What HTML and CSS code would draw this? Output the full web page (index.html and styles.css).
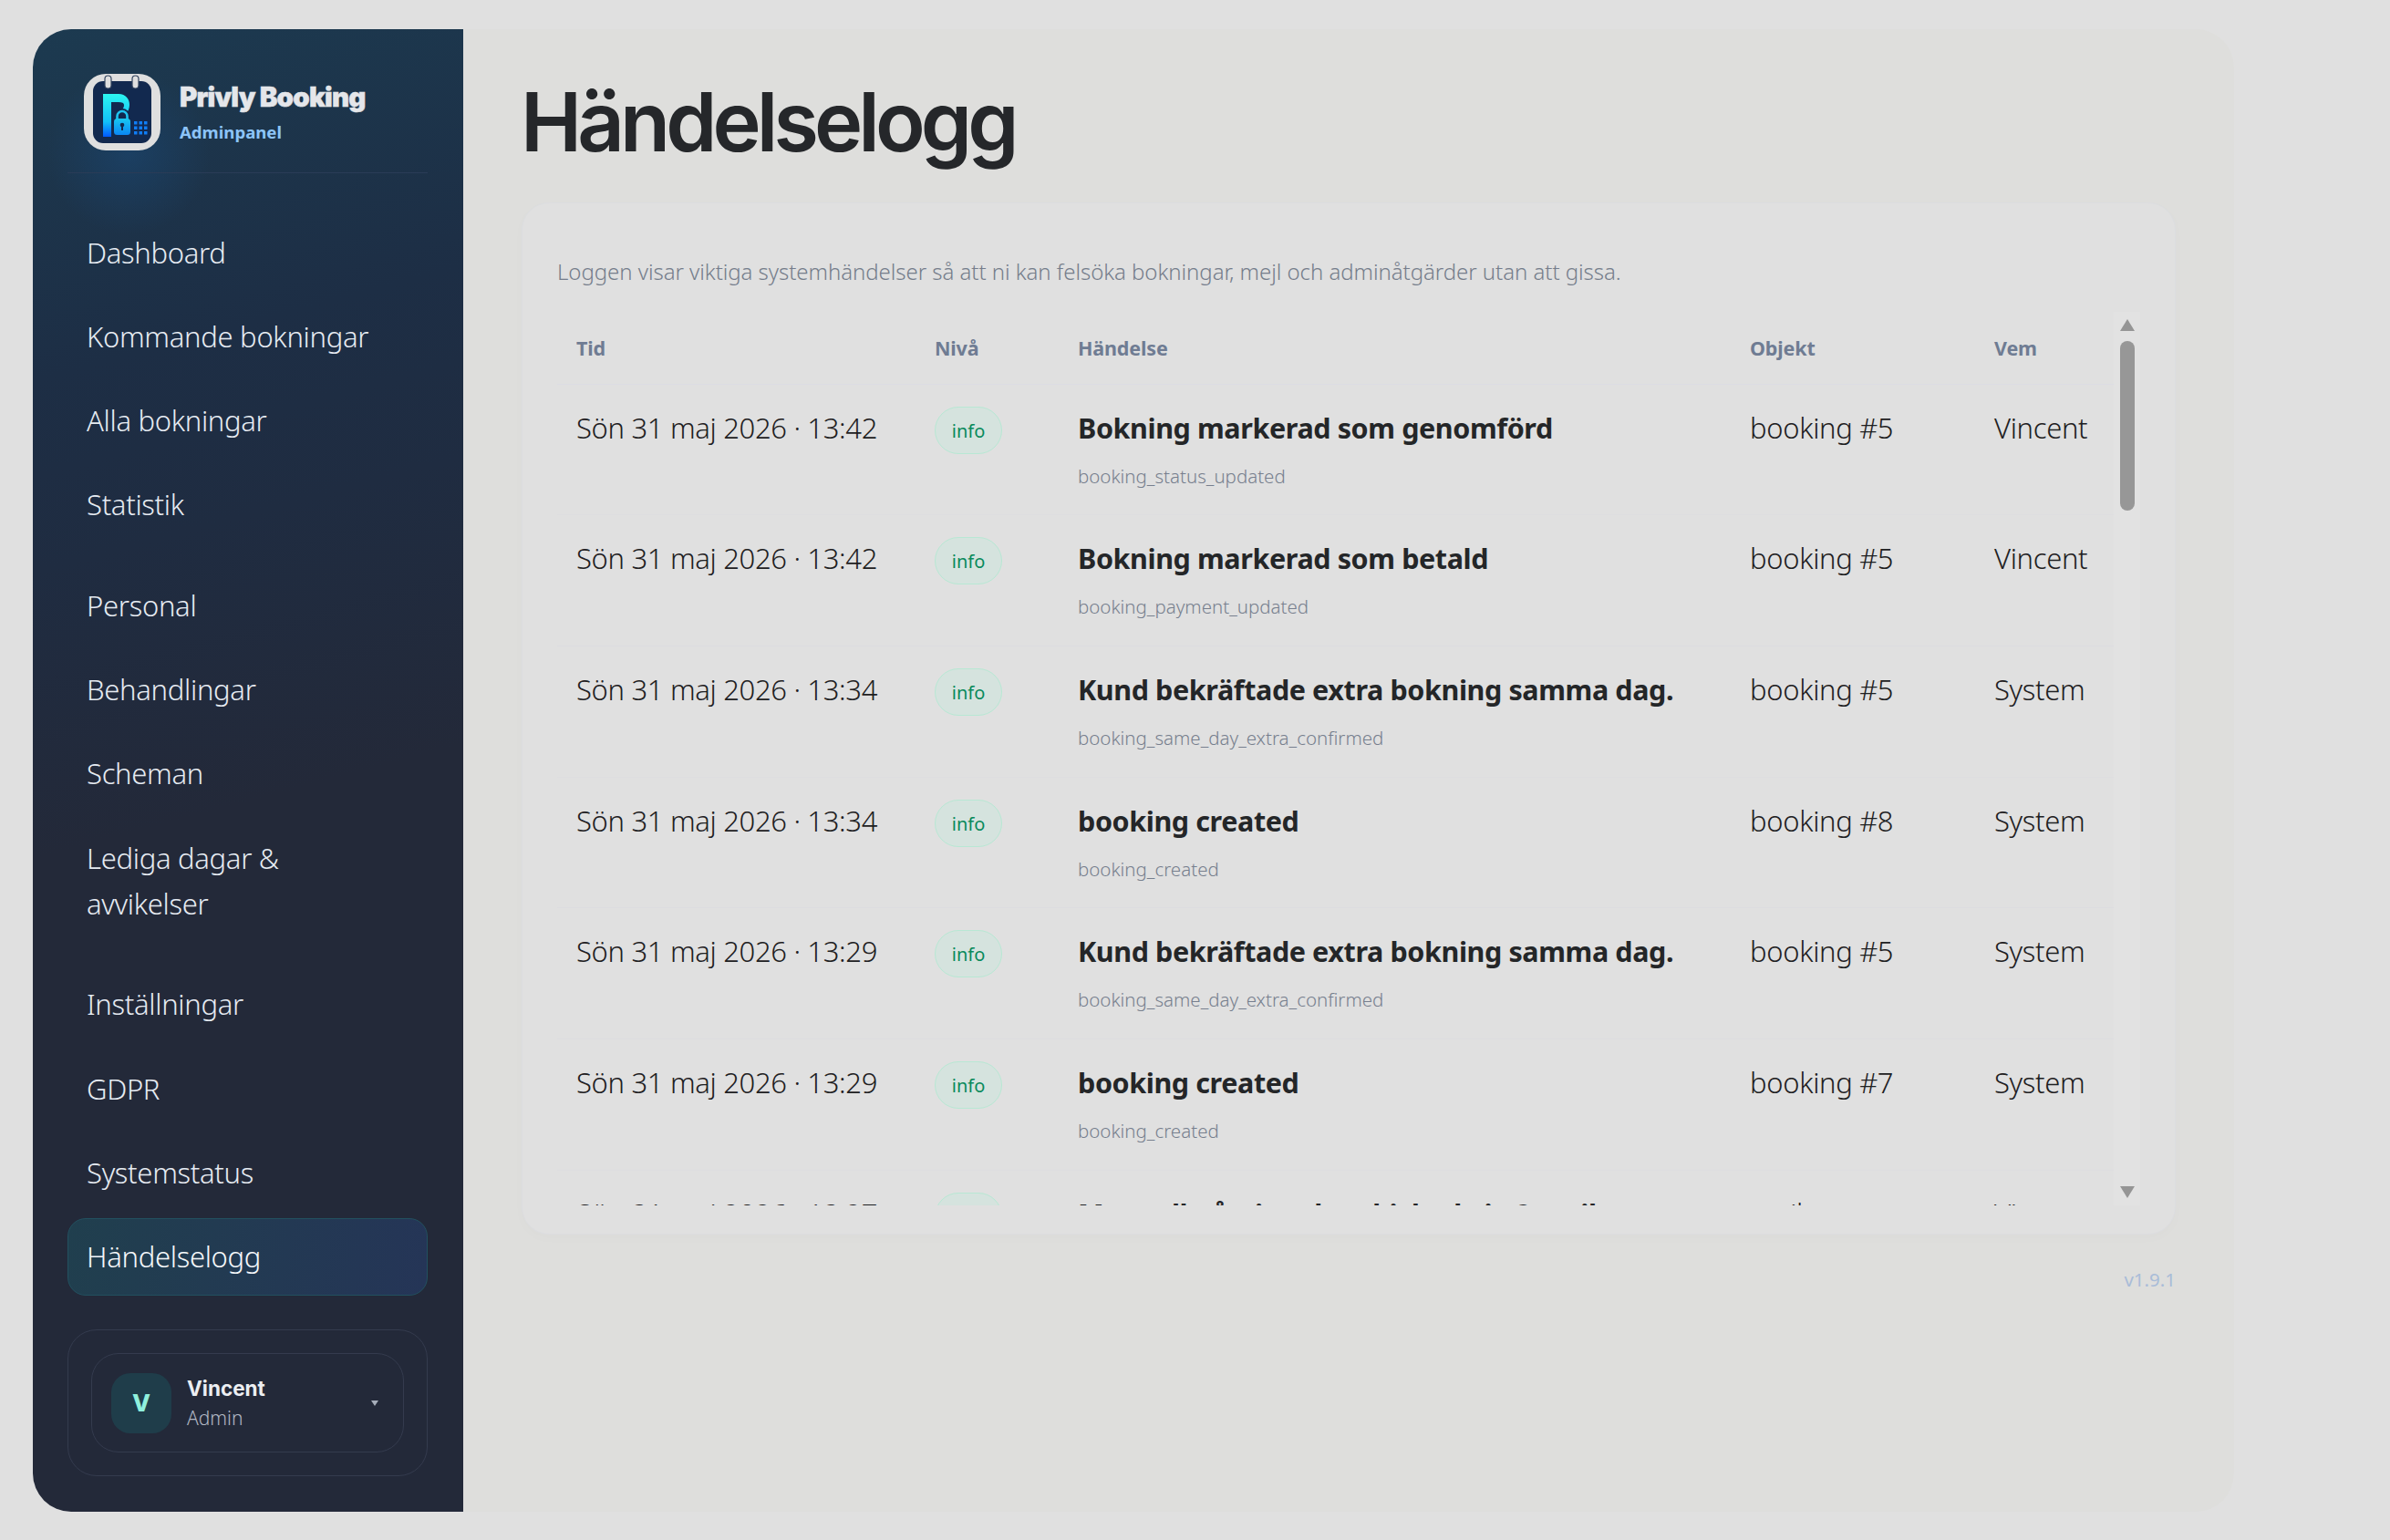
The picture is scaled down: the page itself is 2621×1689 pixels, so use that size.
FILE: index.html
```html
<!DOCTYPE html>
<html lang="sv">

<head>
    <meta charset="UTF-8" />
    <title>Händelselogg</title>
    <link rel="stylesheet" href="styles.css">
</head>

<body>
    <div class="app">
        <aside class="sidebar">
            <div class="brand">
                <svg class="brand-logo" viewBox="0 0 84 84">
                    <defs>
                        <linearGradient id="pGrad" x1="0" y1="0" x2="0" y2="1">
                            <stop offset="0" stop-color="#2cf5f0" />
                            <stop offset="0.65" stop-color="#12c0f8" />
                            <stop offset="1" stop-color="#0058ff" />
                        </linearGradient>
                        <linearGradient id="lockGrad" x1="0" y1="0" x2="0" y2="1">
                            <stop offset="0" stop-color="#18c8f0" />
                            <stop offset="1" stop-color="#0a86f5" />
                        </linearGradient>
                    </defs>
                    <rect width="84" height="84" rx="24" fill="#dfdfdf" />
                    <rect x="10" y="8" width="64" height="68" rx="11" fill="#12294f" />
                    <rect x="23" y="2" width="7" height="14" rx="3.500" fill="#dfdfdf" stroke="#33445e" stroke-width="1.200" />
                    <rect x="53" y="2" width="7" height="14" rx="3.500" fill="#dfdfdf" stroke="#33445e" stroke-width="1.200" />
                    <path d="M21 22H38C46 22 50 28 50 34C50 38 48.500 41 46 44L41 40C43.500 38 44 36 44 34C44 32 42 31 38 31H30V69H21Z" fill="url(#pGrad)" />
                    <path d="M36.500 50v-3.500a5.500 5.500 0 0 1 11 0V50" fill="none" stroke="#12294f" stroke-width="6" />
                    <path d="M36.500 50v-3.500a5.500 5.500 0 0 1 11 0V50" fill="none" stroke="#1fc4f0" stroke-width="2.600" />
                    <rect x="33" y="49" width="18" height="18" rx="3.500" fill="url(#lockGrad)" />
                    <circle cx="42" cy="56" r="2.300" fill="#12294f" />
                    <rect x="41" y="56" width="2" height="6" fill="#12294f" />
                    <g fill="#0f7df5">
                        <rect x="55" y="52" width="3.500" height="3.500" />
                        <rect x="60.500" y="52" width="3.500" height="3.500" />
                        <rect x="66" y="52" width="3.500" height="3.500" />
                        <rect x="55" y="57.500" width="3.500" height="3.500" />
                        <rect x="60.500" y="57.500" width="3.500" height="3.500" />
                        <rect x="66" y="57.500" width="3.500" height="3.500" />
                        <rect x="55" y="63" width="3.500" height="3.500" />
                        <rect x="60.500" y="63" width="3.500" height="3.500" />
                        <rect x="66" y="63" width="3.500" height="3.500" />
                    </g>
                </svg>
                <div class="brand-text">
                    <div class="brand-name">Privly Booking</div>
                    <div class="brand-sub">Adminpanel</div>
                </div>
            </div>

            <nav class="nav">
                <div class="nav-group">
                    <a class="nav-item">Dashboard</a>
                    <a class="nav-item">Kommande bokningar</a>
                    <a class="nav-item">Alla bokningar</a>
                    <a class="nav-item">Statistik</a>
                </div>
                <div class="nav-group">
                    <a class="nav-item">Personal</a>
                    <a class="nav-item">Behandlingar</a>
                    <a class="nav-item">Scheman</a>
                    <a class="nav-item">Lediga dagar &amp;<br>avvikelser</a>
                </div>
                <div class="nav-group">
                    <a class="nav-item">Inställningar</a>
                    <a class="nav-item">GDPR</a>
                    <a class="nav-item">Systemstatus</a>
                    <a class="nav-item active">Händelselogg</a>
                </div>
            </nav>

            <div class="user-box">
                <div class="user-inner">
                    <div class="avatar">V</div>
                    <div class="user-text">
                        <div class="user-name">Vincent</div>
                        <div class="user-role">Admin</div>
                    </div>
                    <span class="user-caret"></span>
                </div>
            </div>
        </aside>

        <main class="main">
            <h1 class="page-title">Händelselogg</h1>

            <section class="card">
                <p class="card-intro">Loggen visar viktiga systemhändelser så att ni kan felsöka bokningar, mejl och adminåtgärder utan att gissa.</p>

                <div class="log-wrap">
                    <div class="log-viewport">
                        <table class="log-table">
                            <colgroup>
                                <col class="col-time">
                                <col class="col-level">
                                <col class="col-event">
                                <col class="col-object">
                                <col class="col-who">
                            </colgroup>
                            <thead>
                                <tr>
                                    <th>Tid</th>
                                    <th>Nivå</th>
                                    <th>Händelse</th>
                                    <th>Objekt</th>
                                    <th>Vem</th>
                                </tr>
                            </thead>
                            <tbody>
                                <tr>
                                    <td>Sön 31 maj 2026 · 13:42</td>
                                    <td><span class="badge">info</span></td>
                                    <td><div class="event-title">Bokning markerad som genomförd</div><div class="event-code">booking_status_updated</div></td>
                                    <td>booking #5</td>
                                    <td>Vincent</td>
                                </tr>
                                <tr>
                                    <td>Sön 31 maj 2026 · 13:42</td>
                                    <td><span class="badge">info</span></td>
                                    <td><div class="event-title">Bokning markerad som betald</div><div class="event-code">booking_payment_updated</div></td>
                                    <td>booking #5</td>
                                    <td>Vincent</td>
                                </tr>
                                <tr>
                                    <td>Sön 31 maj 2026 · 13:34</td>
                                    <td><span class="badge">info</span></td>
                                    <td><div class="event-title">Kund bekräftade extra bokning samma dag.</div><div class="event-code">booking_same_day_extra_confirmed</div></td>
                                    <td>booking #5</td>
                                    <td>System</td>
                                </tr>
                                <tr>
                                    <td>Sön 31 maj 2026 · 13:34</td>
                                    <td><span class="badge">info</span></td>
                                    <td><div class="event-title">booking created</div><div class="event-code">booking_created</div></td>
                                    <td>booking #8</td>
                                    <td>System</td>
                                </tr>
                                <tr>
                                    <td>Sön 31 maj 2026 · 13:29</td>
                                    <td><span class="badge">info</span></td>
                                    <td><div class="event-title">Kund bekräftade extra bokning samma dag.</div><div class="event-code">booking_same_day_extra_confirmed</div></td>
                                    <td>booking #5</td>
                                    <td>System</td>
                                </tr>
                                <tr>
                                    <td>Sön 31 maj 2026 · 13:29</td>
                                    <td><span class="badge">info</span></td>
                                    <td><div class="event-title">booking created</div><div class="event-code">booking_created</div></td>
                                    <td>booking #7</td>
                                    <td>System</td>
                                </tr>
                                <tr>
                                    <td>Sön 31 maj 2026 · 13:27</td>
                                    <td><span class="badge">info</span></td>
                                    <td><div class="event-title">Manuell påminnelse skickad via 2 mejl</div><div class="event-code">booking_reminder_sent</div></td>
                                    <td>mejl</td>
                                    <td>Vincent</td>
                                </tr>
                            </tbody>
                        </table>
                    </div>
                    <div class="scrollbar">
                        <span class="scroll-arrow up"></span>
                        <span class="scroll-thumb"></span>
                        <span class="scroll-arrow down"></span>
                    </div>
                </div>
            </section>

            <div class="version">v1.9.1</div>
        </main>
    </div>
</body>

</html>
```

FILE: styles.css
```css
body {
    margin: 0;
    font-family: 'Noto Sans', 'Open Sans', sans-serif;
    background-color: #e0e0e0;
    color: #242628;
}

/* Whole app frame */
.app {
    display: flex;
    width: 2414px;
    height: 1626px;
    margin: 32px 0 0 36px;
}

/* Sidebar */
.sidebar {
    width: 472px;
    box-sizing: border-box;
    padding: 0 39px 0 38px;
    border-radius: 42px 0 0 42px;
    display: flex;
    flex-direction: column;
    background-image: radial-gradient(circle 90px at 105px 135px, rgba(26, 72, 118, 0.55), transparent 100%),
                      linear-gradient(165deg, #1c3a50 0%, #1d2e45 22%, #1f2c41 34%, #232939 52%, #232939 100%);
}

.brand {
    display: flex;
    align-items: center;
    gap: 21px;
    height: 158px;
    box-sizing: border-box;
    padding: 49px 0 25px 18px;
    border-bottom: 1px solid #2a3c57;
}

.brand-logo {
    width: 84px;
    height: 84px;
    flex: none;
}

.brand-name {
    font-family: 'Inter', sans-serif;
    font-size: 29.500px;
    font-weight: 900;
    line-height: 36px;
    letter-spacing: -0.800px;
    color: #e4e6ea;
    -webkit-text-stroke: 0.500px #e4e6ea;
}

.brand-sub {
    margin-top: 8px;
    font-size: 18.600px;
    font-weight: 700;
    line-height: 26px;
    color: #8cc4f8;
}

.nav {
    margin-top: 44px;
    flex: 1;
    display: flex;
    flex-direction: column;
    gap: 25.500px;
}

.nav-group {
    display: flex;
    flex-direction: column;
    gap: 7.300px;
}

.nav-item {
    display: block;
    padding: 16.500px 20px;
    border: 1px solid transparent;
    border-radius: 20px;
    font-size: 31px;
    font-weight: 300;
    line-height: 50px;
    letter-spacing: -0.300px;
    color: #e6ebf2;
}

.nav-item.active {
    color: #f4f7fa;
    border-color: #22505f;
    background-image: linear-gradient(100deg, #203f4e, #253557);
}

.user-box {
    margin-bottom: 39px;
    height: 161px;
    box-sizing: border-box;
    padding: 25px;
    border: 1px solid #343b4e;
    border-radius: 32px;
}

.user-inner {
    display: flex;
    align-items: center;
    height: 100%;
    box-sizing: border-box;
    padding: 0 14px 0 21px;
    border: 1px solid #343b4e;
    border-radius: 30px;
}

.avatar {
    width: 66px;
    height: 66px;
    flex: none;
    display: flex;
    align-items: center;
    justify-content: center;
    border-radius: 21px;
    background-color: #1f3d4a;
    color: #8ff0dd;
    font-family: 'Inter', sans-serif;
    font-size: 26px;
    font-weight: 800;
}

.user-text {
    flex: 1;
    margin-left: 17px;
}

.user-name {
    font-family: 'Inter', sans-serif;
    font-size: 22.500px;
    font-weight: 700;
    line-height: 30px;
    color: #eceef2;
}

.user-role {
    margin-top: 3px;
    font-size: 21px;
    font-weight: 300;
    line-height: 29px;
    color: #b2b8c4;
}

.user-caret {
    width: 0;
    height: 0;
    margin-right: 13px;
    border-left: 4px solid transparent;
    border-right: 4px solid transparent;
    border-top: 6px solid #a6adba;
}

/* Main panel */
.main {
    flex: 1;
    box-sizing: border-box;
    padding: 0 64px;
    border-radius: 0 42px 42px 0;
    background-color: #dededc;
}

.page-title {
    margin: 0 0 0 -1px;
    height: 190px;
    box-sizing: border-box;
    padding-top: 43px;
    font-family: 'Inter', sans-serif;
    font-size: 90px;
    font-weight: 600;
    line-height: 118px;
    letter-spacing: -4.900px;
    color: #25272a;
}

.card {
    height: 1132px;
    box-sizing: border-box;
    padding: 60px 38px 0;
    border: 1px solid #dcdde0;
    border-radius: 30px;
    background-color: #e0e0e0;
    box-shadow: 0 4px 14px rgba(0, 0, 0, 0.015);
}

.card-intro {
    margin: 0 0 29px;
    font-size: 24px;
    font-weight: 300;
    line-height: 30px;
    letter-spacing: -0.050px;
    color: #757d8b;
}

.log-wrap {
    display: flex;
    height: 980px;
}

.log-viewport {
    width: 1707px;
    flex: none;
    overflow: hidden;
}

.log-table {
    width: 100%;
    table-layout: fixed;
    border-collapse: collapse;
}

.col-time { width: 393px; }
.col-level { width: 157px; }
.col-event { width: 737px; }
.col-object { width: 268px; }
.col-who { width: 152px; }

.log-table th {
    height: 79px;
    box-sizing: border-box;
    padding: 0 21px;
    text-align: left;
    font-size: 21.500px;
    font-weight: 700;
    letter-spacing: -0.150px;
    color: #6f7c93;
    border-bottom: 1px solid #dcdde3;
}

.log-table td {
    height: 143.700px;
    box-sizing: border-box;
    padding: 24px 21px 0;
    vertical-align: top;
    font-size: 31px;
    font-weight: 300;
    line-height: 46px;
    letter-spacing: -0.330px;
    white-space: nowrap;
    color: #1e2022;
    border-bottom: 1px solid #dddde0;
}

.badge {
    display: inline-block;
    box-sizing: border-box;
    width: 74px;
    height: 52px;
    vertical-align: top;
    border: 1px solid #b8e8d4;
    border-radius: 26px;
    background-color: #d5e3de;
    color: #0a8a5c;
    font-size: 20px;
    font-weight: 400;
    line-height: 52px;
    letter-spacing: 0;
    text-align: center;
}

.event-title {
    font-size: 30.500px;
    font-weight: 700;
    line-height: 46px;
    letter-spacing: -0.400px;
    color: #242628;
}

.event-code {
    margin-top: 15px;
    font-size: 20.500px;
    font-weight: 300;
    line-height: 30px;
    letter-spacing: 0;
    color: #777f8e;
}

/* Scrollbar drawn next to the list */
.scrollbar {
    width: 29px;
    box-sizing: border-box;
    padding: 8px 6px 8px 7px;
    display: flex;
    flex-direction: column;
    align-items: center;
    background-color: #e2e2e2;
}

.scroll-arrow {
    width: 0;
    height: 0;
    border-left: 8px solid transparent;
    border-right: 8px solid transparent;
}

.scroll-arrow.up {
    border-bottom: 13px solid #959595;
}

.scroll-arrow.down {
    margin-top: auto;
    border-top: 13px solid #959595;
}

.scroll-thumb {
    width: 16px;
    height: 186px;
    margin-top: 11px;
    border-radius: 8px;
    background-color: #979797;
}

.version {
    margin-top: 36px;
    text-align: right;
    font-size: 20.500px;
    font-weight: 400;
    line-height: 26px;
    color: #a9bcd8;
}
```
